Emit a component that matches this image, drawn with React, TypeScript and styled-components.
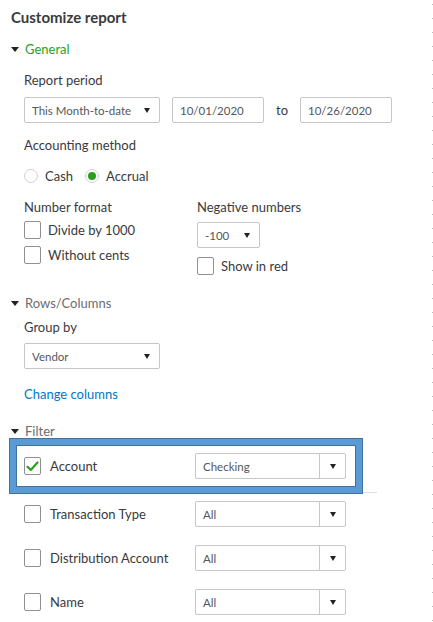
import React from "react";
import styled, { createGlobalStyle } from "styled-components";

const GlobalStyle = createGlobalStyle`
  body {
    margin: 0;
    background: #fff;
    font-family: Lato, "Open Sans", sans-serif;
    color: #393a3d;
  }
`;

const Panel = styled.div`
  width: 433px;
  height: 622px;
  box-sizing: border-box;
  padding: 7px 0 0 11px;
  overflow: hidden;
  background-image: linear-gradient(to bottom, #b9b9b9 0 1px, transparent 1px);
  background-size: 1px 14px;
  background-position: right 0 top 4px;
  background-repeat: repeat-y;
`;

const Title = styled.div`
  font-size: 15px;
  font-weight: 700;
  line-height: 20px;
  color: #393a3d;
`;

const SectionHeader = styled.div<{ $active?: boolean; $mt: number }>`
  display: flex;
  align-items: center;
  gap: 6px;
  margin-top: ${(p) => p.$mt}px;
  font-size: 13px;
  line-height: 18px;
  color: ${(p) => (p.$active ? "#2ca01c" : "#6b6c72")};
`;

const Caret = styled.span`
  width: 0;
  height: 0;
  border-left: 4px solid transparent;
  border-right: 4px solid transparent;
  border-top: 5px solid #222;
`;

const Body = styled.div`
  padding-left: 13px;
`;

const Label = styled.div<{ $mt: number }>`
  margin-top: ${(p) => p.$mt}px;
  font-size: 13px;
  line-height: 18px;
  color: #393a3d;
`;

const Row = styled.div<{ $mt: number }>`
  display: flex;
  align-items: center;
  margin-top: ${(p) => p.$mt}px;
`;

const Field = styled.div<{ $w: number; $mt?: number }>`
  box-sizing: border-box;
  width: ${(p) => p.$w}px;
  height: 26px;
  margin-top: ${(p) => p.$mt ?? 0}px;
  border: 1px solid #c4c6cb;
  border-radius: 2px;
  display: flex;
  align-items: center;
  padding-left: 7px;
  font-size: 11.5px;
  color: #55565b;
  background: #fff;
`;

const FieldText = styled.span`
  flex: 1;
  white-space: nowrap;
`;

const Arrow = styled.span`
  width: 0;
  height: 0;
  border-left: 3.5px solid transparent;
  border-right: 3.5px solid transparent;
  border-top: 5px solid #222;
  margin-right: 9px;
`;

const ArrowCell = styled.span`
  width: 25px;
  align-self: stretch;
  border-left: 1px solid #c4c6cb;
  display: flex;
  align-items: center;
  justify-content: center;
  & > span {
    margin-right: 0;
  }
`;

const ToText = styled.span`
  font-size: 13px;
  margin: 0 12px;
  color: #393a3d;
`;

const Radio = styled.span<{ $on?: boolean }>`
  box-sizing: border-box;
  width: 14px;
  height: 14px;
  border-radius: 50%;
  border: 1px solid #cfd1d5;
  display: inline-flex;
  align-items: center;
  justify-content: center;
  &::after {
    content: "";
    display: ${(p) => (p.$on ? "block" : "none")};
    width: 8px;
    height: 8px;
    border-radius: 50%;
    background: #2ca01c;
  }
`;

const OptText = styled.span<{ $gap?: number }>`
  font-size: 13px;
  margin-left: 7px;
  margin-right: ${(p) => p.$gap ?? 0}px;
  color: #393a3d;
`;

const FormatGrid = styled.div`
  display: grid;
  grid-template-columns: 173px auto;
  margin-top: 14px;
`;

const Col = styled.div`
  display: flex;
  flex-direction: column;
`;

const Check = styled.span<{ $on?: boolean }>`
  box-sizing: border-box;
  width: 17px;
  height: 18px;
  border: 1px solid #8d9096;
  border-radius: 2px;
  display: inline-flex;
  align-items: center;
  justify-content: center;
  background: #fff;
  flex-shrink: 0;
`;

const CheckRow = styled.div<{ $mt: number }>`
  display: flex;
  align-items: center;
  margin-top: ${(p) => p.$mt}px;
  height: 18px;
`;

const Link = styled.div`
  margin-top: 16px;
  font-size: 13px;
  line-height: 18px;
  color: #0077c5;
`;

const FilterBlock = styled.div`
  width: 367px;
  margin-left: -1px;
  margin-top: -1px;
  border-bottom: 1px solid #dcdde0;
  position: relative;
`;

const Highlight = styled.div`
  box-sizing: border-box;
  width: 352px;
  height: 54px;
  margin-bottom: -1px;
  border: 6px solid #5b9bd5;
  box-shadow: 0 0 0 1px #41719c, inset 0 0 0 1px #41719c;
  background: #fff;
  display: flex;
  align-items: center;
  padding-left: 8px;
  position: relative;
`;

const FilterName = styled.span`
  font-size: 13px;
  margin-left: 9px;
  width: 145px;
  color: #393a3d;
`;

const FilterRow = styled.div<{ $mt: number }>`
  display: flex;
  align-items: center;
  margin-top: ${(p) => p.$mt}px;
  height: 26px;
`;

const Tick = () => (
  <svg width="13" height="11" viewBox="0 0 13 11">
    <path d="M1.5 5.8 L4.8 9 L11.5 1.5" fill="none" stroke="#2ca01c" strokeWidth="2.2" strokeLinecap="round" strokeLinejoin="round" />
  </svg>
);

const FilterSelect = ({ value }: { value: string }) => (
  <Field $w={151}>
    <FieldText>{value}</FieldText>
    <ArrowCell>
      <Arrow />
    </ArrowCell>
  </Field>
);

const filters = ["Transaction Type", "Distribution Account", "Name"];

export default function App() {
  return (
    <>
      <GlobalStyle />
      <Panel>
        <Title>Customize report</Title>
        <SectionHeader $active $mt={13}>
          <Caret />
          General
        </SectionHeader>
        <Body>
          <Label $mt={13}>Report period</Label>
          <Row $mt={8}>
            <Field $w={136}>
              <FieldText>This Month-to-date</FieldText>
              <Arrow />
            </Field>
            <div style={{ width: 12 }} />
            <Field $w={92}>10/01/2020</Field>
            <ToText>to</ToText>
            <Field $w={92}>10/26/2020</Field>
          </Row>
          <Label $mt={13}>Accounting method</Label>
          <Row $mt={14}>
            <Radio />
            <OptText $gap={12}>Cash</OptText>
            <Radio $on />
            <OptText>Accrual</OptText>
          </Row>
          <FormatGrid>
            <Col>
              <Label $mt={0}>Number format</Label>
              <CheckRow $mt={5}>
                <Check />
                <OptText>Divide by 1000</OptText>
              </CheckRow>
              <CheckRow $mt={7}>
                <Check />
                <OptText>Without cents</OptText>
              </CheckRow>
            </Col>
            <Col>
              <Label $mt={0}>Negative numbers</Label>
              <Field $w={63} $mt={6}>
                <FieldText>-100</FieldText>
                <Arrow />
              </Field>
              <CheckRow $mt={9}>
                <Check />
                <OptText>Show in red</OptText>
              </CheckRow>
            </Col>
          </FormatGrid>
        </Body>
        <SectionHeader $mt={19}>
          <Caret />
          Rows/Columns
        </SectionHeader>
        <Body>
          <Label $mt={6}>Group by</Label>
          <Field $w={136} $mt={7}>
            <FieldText>Vendor</FieldText>
            <Arrow />
          </Field>
          <Link>Change columns</Link>
        </Body>
        <SectionHeader $mt={19}>
          <Caret />
          Filter
        </SectionHeader>
        <FilterBlock>
          <Highlight>
            <Check $on>
              <Tick />
            </Check>
            <FilterName>Account</FilterName>
            <FilterSelect value="Checking" />
          </Highlight>
        </FilterBlock>
        <Body>
          {filters.map((f, i) => (
            <FilterRow key={f} $mt={i === 0 ? 8 : 18}>
              <Check />
              <FilterName>{f}</FilterName>
              <FilterSelect value="All" />
            </FilterRow>
          ))}
        </Body>
      </Panel>
    </>
  );
}
